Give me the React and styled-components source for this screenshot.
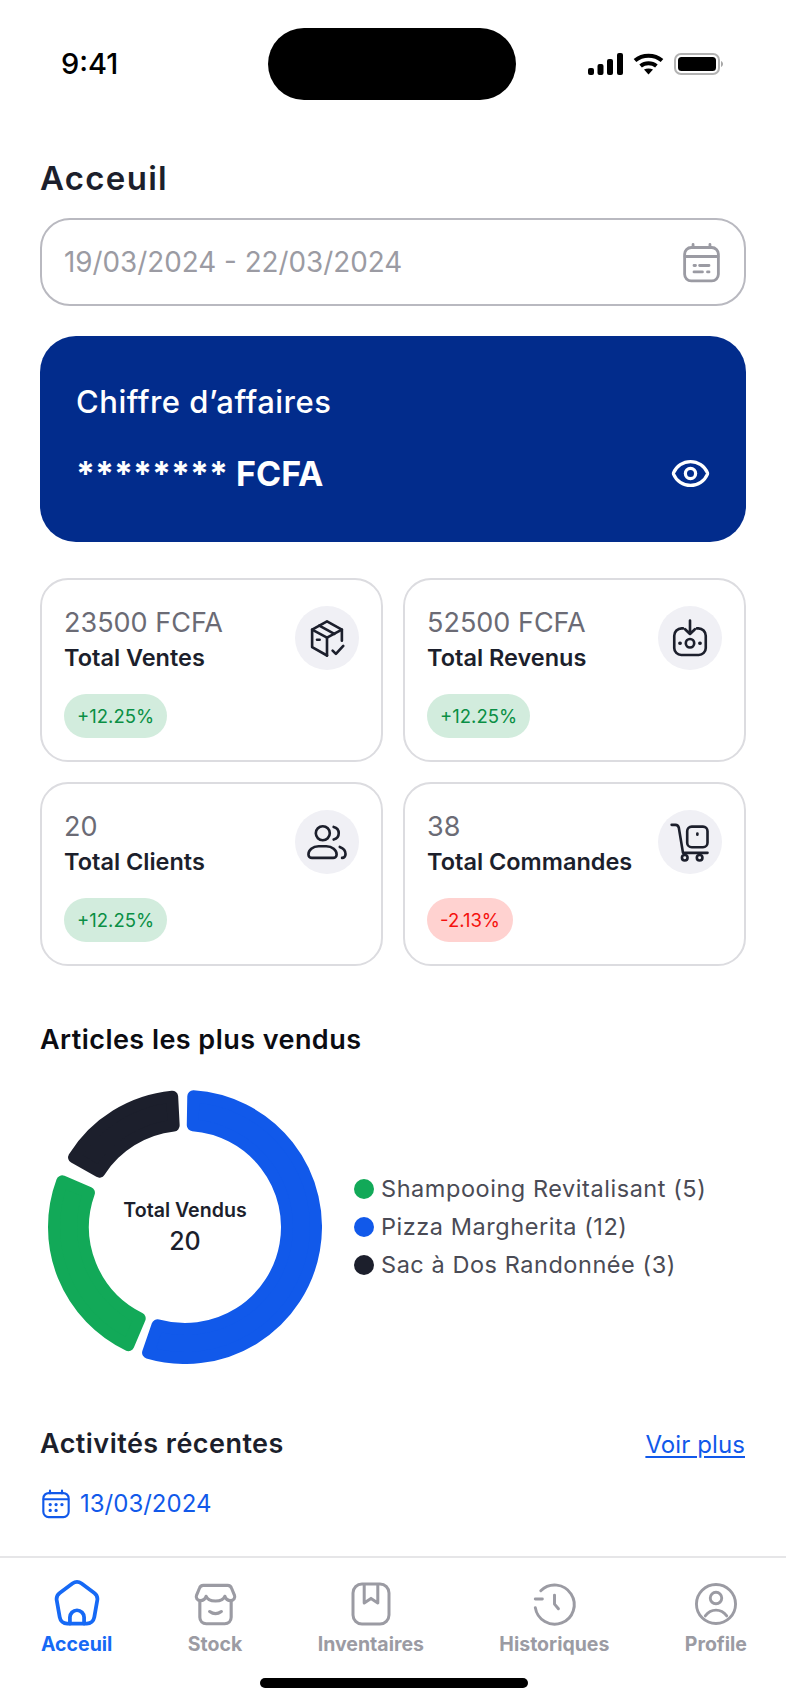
import React from "react";
import styled, { createGlobalStyle } from "styled-components";
import { Eye } from "lucide-react";

const BLUE = "#1159ea";
const INK = "#1c1f2c";
const GREY = "#9b9ba3";

const GlobalStyle = createGlobalStyle`
  html, body { margin: 0; padding: 0; background: #fff; }
  * { box-sizing: border-box; }
  body { font-family: "Inter", "Liberation Sans", sans-serif; color: ${INK}; }
`;

const Screen = styled.div`
  width: 786px;
  height: 1704px;
  display: flex;
  flex-direction: column;
  overflow: hidden;
  background: #fff;
`;

/* status bar */
const StatusBar = styled.div`
  display: grid;
  grid-template-columns: 1fr auto 1fr;
  align-items: center;
  padding: 28px 63px 0 61px;
  height: 100px;
`;
const Time = styled.div`
  font-size: 29px;
  font-weight: 500;
  color: #000;
  line-height: 36px;
`;
const Island = styled.div`
  width: 248px;
  height: 72px;
  border-radius: 36px;
  background: #000;
`;
const StatusIcons = styled.div`
  display: flex;
  justify-content: flex-end;
  align-items: center;
  gap: 10px;
`;
const Glyph = styled.svg`
  display: block;
  flex: none;
  width: ${(p) => p.$size}px;
  height: ${(p) => p.$size}px;
  fill: none;
  stroke: currentColor;
  stroke-width: ${(p) => p.$weight || 1.5};
  stroke-linecap: round;
  stroke-linejoin: round;
`;

/* main content */
const Main = styled.main`
  flex: 1;
  display: flex;
  flex-direction: column;
  padding: 58px 40px 0;
`;
const Title = styled.h1`
  margin: 0;
  font-size: 33px;
  line-height: 40px;
  font-weight: 600;
  color: ${INK};
  letter-spacing: 1.3px;
`;
const DateField = styled.div`
  margin-top: 20px;
  height: 88px;
  border: 2px solid #b9b9c0;
  border-radius: 30px;
  display: flex;
  align-items: center;
  justify-content: space-between;
  padding: 0 20px 0 22px;
  color: ${GREY};
  font-size: 27.8px;
`;
const RevenueCard = styled.section`
  margin-top: 30px;
  height: 206px;
  border-radius: 36px;
  background: #022c8c;
  color: #fff;
  padding: 46px 36px 0;
`;
const RevenueLabel = styled.div`
  font-size: 31px;
  line-height: 40px;
  font-weight: 500;
  letter-spacing: 0.5px;
`;
const RevenueRow = styled.div`
  margin-top: 30px;
  margin-right: -1px;
  display: flex;
  justify-content: space-between;
  align-items: center;
`;
const RevenueValue = styled.div`
  font-size: 34px;
  line-height: 40px;
  font-weight: 700;
  margin-top: 2px;
`;
const StatGrid = styled.div`
  margin-top: 36px;
  display: grid;
  grid-template-columns: 1fr 1fr;
  gap: 20px;
`;
const StatCard = styled.div`
  height: 184px;
  border: 2px solid #dcdce0;
  border-radius: 28px;
  padding: 24px 22px 0;
  display: flex;
  flex-direction: column;
  align-items: flex-start;
  position: relative;
`;
const StatValue = styled.div`
  font-size: 27px;
  line-height: 36px;
  margin-top: 1px;
  color: #6b6b75;
`;
const StatLabel = styled.div`
  font-size: 23.5px;
  line-height: 32px;
  font-weight: 600;
  color: ${INK};
  white-space: nowrap;
  margin-top: 1px;
`;
const IconDisc = styled.div`
  position: absolute;
  top: 26px;
  right: 22px;
  width: 64px;
  height: 64px;
  border-radius: 50%;
  background: #f0f0f5;
  color: ${INK};
  display: flex;
  align-items: center;
  justify-content: center;
`;
const Badge = styled.span`
  margin-top: 20px;
  height: 44px;
  padding: 0 13px;
  border-radius: 22px;
  display: inline-flex;
  align-items: center;
  font-size: 18.5px;
  background: ${(p) => (p.$down ? "#ffd2d0" : "#d2ecdd")};
  color: ${(p) => (p.$down ? "#f5110d" : "#0a8f45")};
`;
const SectionTitle = styled.h2`
  margin: 0;
  font-size: 27px;
  line-height: 36px;
  font-weight: 600;
  letter-spacing: 0.45px;
  color: ${(p) => p.$color || "#0b0c12"};
`;
const TopSection = styled.section`
  margin-top: 56px;
`;
const ChartRow = styled.div`
  margin-top: 32px;
  display: flex;
  align-items: center;
  padding-left: 8px;
  gap: 32px;
`;
const Donut = styled.div`
  width: 274px;
  height: 274px;
  flex: none;
  position: relative;
`;
const DonutCenter = styled.div`
  position: absolute;
  inset: 0;
  display: flex;
  flex-direction: column;
  align-items: center;
  justify-content: center;
  gap: 4px;
`;
const DonutLabel = styled.div`
  font-size: 19.6px;
  line-height: 24px;
  font-weight: 600;
`;
const DonutTotal = styled.div`
  font-size: 25px;
  line-height: 30px;
  font-weight: 500;
`;
const Legend = styled.ul`
  list-style: none;
  margin: 0;
  padding: 0;
  display: flex;
  flex-direction: column;
  gap: 8px;
`;
const LegendItem = styled.li`
  display: flex;
  align-items: center;
  gap: 7px;
  font-size: 23.5px;
  line-height: 30px;
  letter-spacing: 0.55px;
  color: #4a4b55;
  white-space: nowrap;
`;
const Dot = styled.span`
  width: 20px;
  height: 20px;
  border-radius: 50%;
  background: ${(p) => p.$color};
`;
const RecentHead = styled.div`
  margin-top: 62px;
  display: flex;
  justify-content: space-between;
  align-items: center;
`;
const MoreLink = styled.a`
  color: ${BLUE};
  font-size: 24px;
  letter-spacing: 0.1px;
  text-decoration: underline;
  text-underline-offset: 3px;
  margin-right: 1px;
`;
const DateRow = styled.div`
  margin-top: 24px;
  display: flex;
  align-items: center;
  gap: 8px;
  color: ${BLUE};
  font-size: 24px;
  line-height: 36px;
`;

/* bottom nav */
const BottomNav = styled.nav`
  height: 148px;
  border-top: 2px solid #e6e6e8;
  padding: 21px 39px 0 41px;
  display: flex;
  justify-content: space-between;
  align-items: flex-start;
  position: relative;
`;
const NavItem = styled.div`
  display: flex;
  flex-direction: column;
  align-items: center;
  gap: 1px;
  color: ${(p) => (p.$active ? "#1669f5" : GREY)};
  font-size: 19.5px;
  line-height: 28px;
  font-weight: 700;
`;
const NavSlot = styled.div`
  height: 50px;
  display: flex;
  align-items: center;
  justify-content: center;
`;
const HomeBar = styled.div`
  position: absolute;
  left: 260px;
  bottom: 16px;
  width: 268px;
  height: 10px;
  border-radius: 5px;
  background: #000;
`;

const Icon = ({ size = 42, weight, children }) => (
  <Glyph viewBox="0 0 24 24" $size={size} $weight={weight}>
    {children}
  </Glyph>
);

const BoxCheck = () => (
  <Icon>
    <path d="M20.5 13.5V7.2L12 2.5 3.5 7.2v10L12 22" />
    <path d="M3.5 7.2 12 11.8l8.5-4.6" />
    <path d="M12 11.8V22" />
    <path d="M7.6 4.9 16.2 9.6" />
    <path d="M6.3 13h1.5" />
    <path d="m15.2 19.2 1.9 1.9 4.2-4.6" />
  </Icon>
);
const Inbox = () => (
  <Icon>
    <path d="M8 6.5H7.2A4.2 4.2 0 0 0 3 10.7v7a4 4 0 0 0 4 4h10a4 4 0 0 0 4-4v-7a4.2 4.2 0 0 0-4.2-4.2H16" />
    <path d="M12 2v7.5M9.2 7 12 9.7 14.8 7" />
    <circle cx="12" cy="15" r="2.4" />
    <path d="M6.2 15h.2M17.6 15h.2" strokeWidth="2" />
  </Icon>
);
const Users = () => (
  <Icon>
    <circle cx="9.6" cy="7" r="4" />
    <path d="M15.8 3.4c1.7.4 2.9 1.9 2.9 3.6s-1.2 3.2-2.9 3.6" />
    <path d="M7.2 14.4h4.4c3.4 0 5.9 2.3 5.9 4.7 0 1.2-.9 2-2 2H3.4c-1.1 0-2-.8-2-2 0-2.4 2.4-4.7 5.8-4.7Z" />
    <path d="M19.3 14.8c2 .7 3.3 2.3 3.3 4.1 0 1.2-.8 2.2-2 2.2" />
  </Icon>
);
const Cart = () => (
  <Icon>
    <path d="M1.5 2.2h2.2c1 0 1.7.7 1.9 1.6l2.4 14.4H22" />
    <rect x="10.4" y="3.2" width="11.6" height="11.8" rx="2.6" />
    <path d="M16.2 7.2v.6" />
    <circle cx="9" cy="21" r="1.6" />
    <circle cx="17.5" cy="21" r="1.6" />
  </Icon>
);
const HomeIcon = () => (
  <Icon size={50} weight={1.8}>
    <path d="M9.8 2.2a3.7 3.7 0 0 1 4.4 0l6.1 4.5a3.7 3.7 0 0 1 1.4 3.7l-1.4 7.9a3.7 3.7 0 0 1-3.6 3.1H7.3a3.7 3.7 0 0 1-3.6-3.1L2.3 10.4a3.7 3.7 0 0 1 1.4-3.7Z" />
    <path d="M8.6 21.4v-3a3.4 3.4 0 0 1 6.8 0v3" />
  </Icon>
);
const StoreIcon = () => (
  <Icon size={47} weight={1.6}>
    <path d="M5.8 2.2h12.4c1 0 1.7.6 2 1.5l1.5 3.6c.5 1.3-.4 2.7-1.9 2.7-1.5 0-2.6-.7-3-2.2-.5 1.5-2 2.4-4.8 2.4s-4.3-.9-4.8-2.4c-.4 1.5-1.5 2.2-3 2.2-1.5 0-2.4-1.4-1.9-2.7l1.5-3.6c.3-.9 1-1.5 2-1.5Z" />
    <path d="M4 10.2v8.3c0 1.9 1.4 3.3 3.3 3.3h9.4c1.9 0 3.3-1.4 3.3-3.3v-8.3" />
    <path d="M9 15.6c1.9 1.4 4.1 1.4 6 0" />
  </Icon>
);
const BookmarkBox = () => (
  <Icon size={48} weight={1.5}>
    <rect x="3" y="2" width="18" height="20" rx="4.5" />
    <path d="M8.6 2.2v9.3l3.4-2.3 3.4 2.3V2.2" />
  </Icon>
);
const HistoryIcon = () => (
  <Icon size={47} weight={1.5}>
    <path d="M2.2 13.6A10 10 0 1 0 5 5" />
    <path d="M2.2 9.2h3.6" />
    <path d="M12 7.2v4.6l2 2.4" />
  </Icon>
);
const ProfileIcon = () => (
  <Icon size={46} weight={1.5}>
    <circle cx="12" cy="12" r="10.2" />
    <circle cx="12" cy="8.9" r="3" />
    <path d="M6.4 18.2c1.5-2 3.5-3 5.6-3s4.1 1 5.6 3" />
  </Icon>
);
const CalendarLines = () => (
  <Icon size={45} weight={1.5}>
    <path d="M6.5 4h11a3.5 3.5 0 0 1 3.5 3.5v10.8a3.5 3.5 0 0 1-3.5 3.5h-11A3.5 3.5 0 0 1 3 18.3V7.5A3.5 3.5 0 0 1 6.5 4Z" />
    <path d="M3.2 8.8h17.6M7.5 2.4V4M16.5 2.4V4" />
    <path d="M8 13.6h.8M11 13.6h5M8 17h4.5M15.2 17h.8" />
  </Icon>
);
const CalendarDots = () => (
  <Icon size={32} weight={1.6}>
    <rect x="2.5" y="3.8" width="19" height="18" rx="4" />
    <path d="M2.8 8.4h18.4M7.5 2v2M16.5 2v2" />
    <path d="M7.6 12.4h.1M12 12.4h.1M16.4 12.4h.1M7.6 16.8h.1M12 16.8h.1" strokeWidth="2.4" />
  </Icon>
);

const Signal = () => (
  <svg width="35" height="22" viewBox="0 0 35 22" fill="#000">
    <rect x="0" y="15" width="6" height="7" rx="2" />
    <rect x="9.5" y="11" width="6" height="11" rx="2" />
    <rect x="19" y="6" width="6" height="16" rx="2" />
    <rect x="29" y="0" width="6" height="22" rx="2" />
  </svg>
);
const Wifi = () => (
  <svg width="31" height="22" viewBox="0 0 31 22" fill="none" stroke="#000" strokeWidth="4">
    <path d="M2 7.6C9.6 1 21.4 1 29 7.6" />
    <path d="M7.6 13c4.6-3.8 11.2-3.8 15.8 0" />
    <path d="M15.5 21.5 11 16.6c2.6-1.6 6.4-1.6 9 0Z" fill="#000" stroke="none" />
  </svg>
);
const Battery = () => (
  <svg width="49" height="22" viewBox="0 0 49 22" fill="none">
    <rect x="1" y="1" width="44" height="20" rx="6" stroke="#b3b3b3" strokeWidth="2" />
    <rect x="4" y="4" width="38" height="14" rx="3.5" fill="#000" />
    <path d="M47 8v6c1.2-.5 2-1.7 2-3s-.8-2.5-2-3Z" fill="#a8a8a8" />
  </svg>
);

// annular sector, inset so that a round stroke gives the soft corners
const CX = 137;
const CY = 137;
const point = (r, deg) => {
  const a = ((deg - 90) * Math.PI) / 180;
  return `${(CX + r * Math.cos(a)).toFixed(2)} ${(CY + r * Math.sin(a)).toFixed(2)}`;
};
const sector = (from, to, corner = 6) => {
  const ro = 137 - corner;
  const ri = 96 + corner;
  const insetO = (corner / ro) * (180 / Math.PI);
  const insetI = (corner / ri) * (180 / Math.PI);
  const large = to - from > 180 ? 1 : 0;
  return [
    `M${point(ro, from + insetO)}`,
    `A${ro} ${ro} 0 ${large} 1 ${point(ro, to - insetO)}`,
    `L${point(ri, to - insetI)}`,
    `A${ri} ${ri} 0 ${large} 0 ${point(ri, from + insetI)}`,
    "Z",
  ].join(" ");
};

const segments = [
  { name: "Shampooing Revitalisant (5)", color: "#12a958", from: 203, to: 293 },
  { name: "Pizza Margherita (12)", color: BLUE, from: 1, to: 199 },
  { name: "Sac à Dos Randonnée (3)", color: INK, from: 299.5, to: 357 },
];

const stats = [
  { value: "23500 FCFA", label: "Total Ventes", change: "+12.25%", icon: <BoxCheck /> },
  { value: "52500 FCFA", label: "Total Revenus", change: "+12.25%", icon: <Inbox /> },
  { value: "20", label: "Total Clients", change: "+12.25%", icon: <Users /> },
  { value: "38", label: "Total Commandes", change: "-2.13%", down: true, icon: <Cart /> },
];

const tabs = [
  { label: "Acceuil", icon: <HomeIcon />, active: true },
  { label: "Stock", icon: <StoreIcon /> },
  { label: "Inventaires", icon: <BookmarkBox /> },
  { label: "Historiques", icon: <HistoryIcon /> },
  { label: "Profile", icon: <ProfileIcon /> },
];

export default function App() {
  return (
    <Screen>
      <GlobalStyle />
      <StatusBar>
        <Time>9:41</Time>
        <Island />
        <StatusIcons>
          <Signal />
          <Wifi />
          <Battery />
        </StatusIcons>
      </StatusBar>
      <Main>
        <Title>Acceuil</Title>
        <DateField>
          19/03/2024 - 22/03/2024
          <CalendarLines />
        </DateField>
        <RevenueCard>
          <RevenueLabel>Chiffre d’affaires</RevenueLabel>
          <RevenueRow>
            <RevenueValue>******** FCFA</RevenueValue>
            <Eye size={41} strokeWidth={1.9} />
          </RevenueRow>
        </RevenueCard>
        <StatGrid>
          {stats.map((s) => (
            <StatCard key={s.label}>
              <StatValue>{s.value}</StatValue>
              <StatLabel>{s.label}</StatLabel>
              <IconDisc>{s.icon}</IconDisc>
              <Badge $down={s.down}>{s.change}</Badge>
            </StatCard>
          ))}
        </StatGrid>
        <TopSection>
          <SectionTitle>Articles les plus vendus</SectionTitle>
          <ChartRow>
            <Donut>
              <svg width="274" height="274" viewBox="0 0 274 274">
                {segments.map((s) => (
                  <path
                    key={s.name}
                    d={sector(s.from, s.to)}
                    fill={s.color}
                    stroke={s.color}
                    strokeWidth="12"
                    strokeLinejoin="round"
                  />
                ))}
              </svg>
              <DonutCenter>
                <DonutLabel>Total Vendus</DonutLabel>
                <DonutTotal>20</DonutTotal>
              </DonutCenter>
            </Donut>
            <Legend>
              {segments.map((s) => (
                <LegendItem key={s.name}>
                  <Dot $color={s.color} />
                  {s.name}
                </LegendItem>
              ))}
            </Legend>
          </ChartRow>
        </TopSection>
        <RecentHead>
          <SectionTitle $color={INK}>Activités récentes</SectionTitle>
          <MoreLink>Voir plus</MoreLink>
        </RecentHead>
        <DateRow>
          <CalendarDots />
          13/03/2024
        </DateRow>
      </Main>
      <BottomNav>
        {tabs.map((t) => (
          <NavItem key={t.label} $active={t.active}>
            <NavSlot>{t.icon}</NavSlot>
            {t.label}
          </NavItem>
        ))}
        <HomeBar />
      </BottomNav>
    </Screen>
  );
}
